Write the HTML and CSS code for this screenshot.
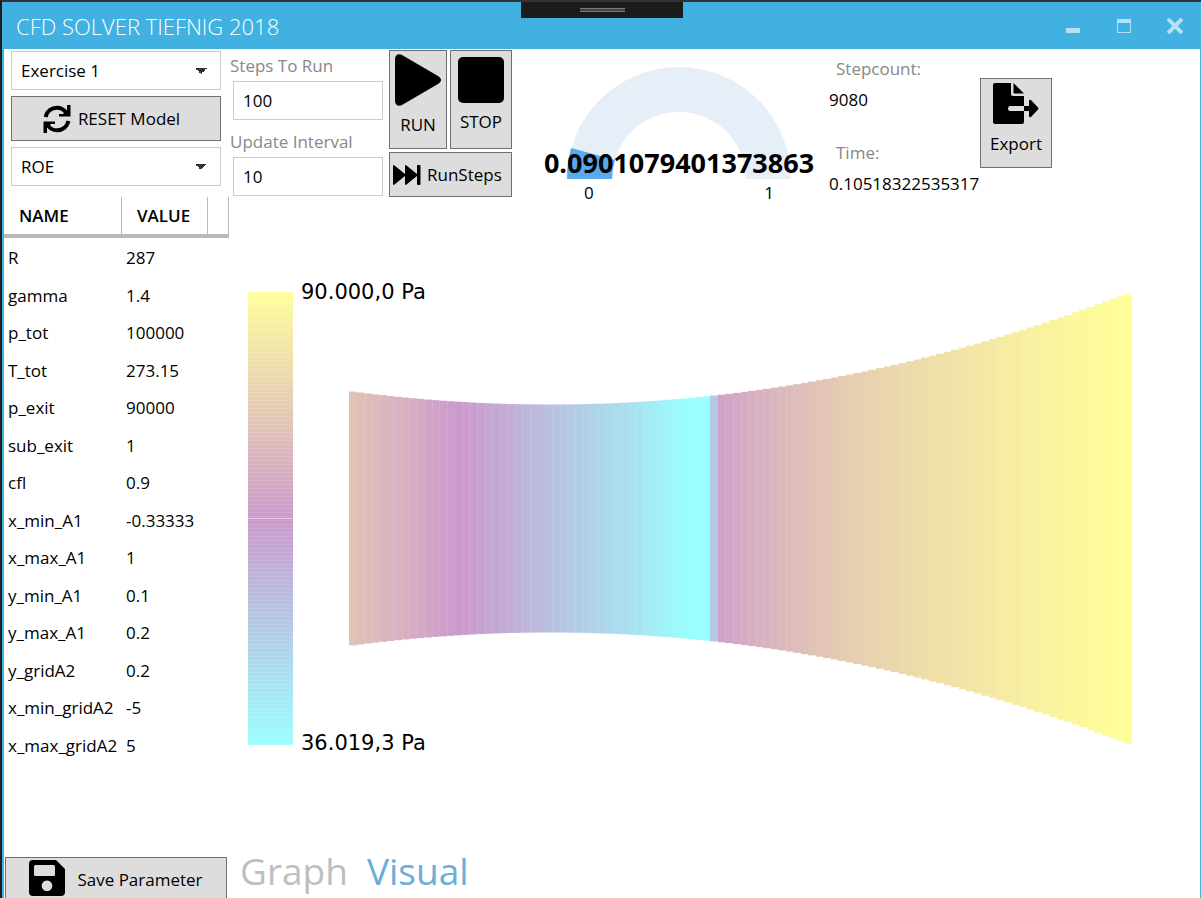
FILE: index.html
```html
<!DOCTYPE html>
<html lang="en">
<head>
<meta charset="utf-8">
<title>CFD Solver Tiefnig 2018</title>
<link rel="stylesheet" href="styles.css">
</head>
<body>
<div class="window">
  <div class="debug-tab" aria-hidden="true"><span class="grip"></span></div>
  <header class="titlebar">
    <h1 class="title">CFD SOLVER TIEFNIG 2018</h1>
    <div class="window-buttons">
      <button type="button" class="win-btn" aria-label="Minimize"><svg width="16" height="16" viewBox="0 0 16 16"><path d="M1 10h14v5H1z" fill="#b5e1f6"/></svg></button>
      <button type="button" class="win-btn" aria-label="Maximize"><svg width="16" height="16" viewBox="0 0 16 16"><path fill-rule="evenodd" d="M1 1h14v14H1zM2 5v9h12V5z" fill="#b5e1f6"/></svg></button>
      <button type="button" class="win-btn" aria-label="Close"><svg width="16" height="16" viewBox="0 0 16 16"><path d="M1 1l14 14M15 1L1 15" stroke="#b5e1f6" stroke-width="4"/></svg></button>
    </div>
  </header>

  <div class="workspace">
    <aside class="sidebar">
      <div class="model">
        <select class="field" aria-label="Exercise"><option>Exercise 1</option></select>
        <button type="button" class="btn reset">
          <svg width="28" height="28" viewBox="0 0 28 28" fill="none" stroke="#000" stroke-width="4"><path d="M2.500 12C4 6 8.500 2.700 14 2.700c4 0 7 1.800 9 4.800"/><path d="M25.500 16C24 22 19.500 25.300 14 25.300c-4 0-7-1.800-9-4.800"/><path d="M27.500 0v11.500H16V9h4l4-4V0zM.5 28V16.500H12V19H8l-4 4v5z" fill="#000" stroke="none"/></svg>
          <span>RESET Model</span>
        </button>
        <select class="field" aria-label="Scheme"><option>ROE</option></select>
      </div>
      <table class="params">
        <thead><tr><th class="name-col">NAME</th><th class="value-col">VALUE</th><th class="rest-col"></th></tr></thead>
        <tbody>
          <tr><td>R</td><td>287</td><td></td></tr>
          <tr><td>gamma</td><td>1.4</td><td></td></tr>
          <tr><td>p_tot</td><td>100000</td><td></td></tr>
          <tr><td>T_tot</td><td>273.15</td><td></td></tr>
          <tr><td>p_exit</td><td>90000</td><td></td></tr>
          <tr><td>sub_exit</td><td>1</td><td></td></tr>
          <tr><td>cfl</td><td>0.9</td><td></td></tr>
          <tr><td>x_min_A1</td><td>-0.33333</td><td></td></tr>
          <tr><td>x_max_A1</td><td>1</td><td></td></tr>
          <tr><td>y_min_A1</td><td>0.1</td><td></td></tr>
          <tr><td>y_max_A1</td><td>0.2</td><td></td></tr>
          <tr><td>y_gridA2</td><td>0.2</td><td></td></tr>
          <tr><td>x_min_gridA2</td><td>-5</td><td></td></tr>
          <tr><td>x_max_gridA2</td><td>5</td><td></td></tr>
        </tbody>
      </table>
      <button type="button" class="btn save">
        <svg width="36" height="36" viewBox="0 0 36 36"><path fill-rule="evenodd" d="M4 0h23l9 9v23a4 4 0 0 1-4 4H4a4 4 0 0 1-4-4V4a4 4 0 0 1 4-4zM6.500 5A1.500 1.500 0 0 0 5 6.500v8A1.500 1.500 0 0 0 6.500 16h18a1.500 1.500 0 0 0 1.500-1.500v-8A1.500 1.500 0 0 0 24.500 5zM18 20.500a5.300 5.300 0 1 0 .01 0z"/></svg>
        <span>Save Parameter</span>
      </button>
    </aside>

    <main class="main">
      <div class="toolbar">
        <div class="steps">
          <label for="steps">Steps To Run</label>
          <input class="field" id="steps" type="text" value="100">
          <label for="interval">Update Interval</label>
          <input class="field" id="interval" type="text" value="10">
        </div>
        <div class="run-grid">
          <button type="button" class="btn tall run">
            <svg width="46" height="52" viewBox="0 0 46 52"><path d="M0 5C0 1 3.500-1 7 1l36 21c4 2.500 4 5.500 0 8L7 51c-3.500 2-7 0-7-4z"/></svg>
            <span>RUN</span>
          </button>
          <button type="button" class="btn tall stop">
            <svg width="46" height="46" viewBox="0 0 46 46"><rect width="46" height="46" rx="5"/></svg>
            <span>STOP</span>
          </button>
          <button type="button" class="btn run-steps">
            <svg width="28" height="20" viewBox="0 0 28 20"><path d="M0 1Q0-.5 1.500.5L12 9V1Q12-.5 13.500.5L24 9V1q0-1 1-1h1.500q1 0 1 1v18q0 1-1 1H25q-1 0-1-1v-8l-10.500 8.500Q12 20.500 12 19v-8L1.500 19.500Q0 20.500 0 19z"/></svg>
            <span>RunSteps</span>
          </button>
        </div>
        <div class="gauge">
          <svg class="gauge-arc" width="226" height="113" viewBox="0 0 226 113">
            <path d="M1 112A112 112 0 0 1 225 112H180A67 67 0 0 0 46 112z" fill="#e6eef8"/>
            <path d="M1 112A112 112 0 0 1 5 81L49 93A67 67 0 0 0 46 112z" fill="#5aa9ec"/>
          </svg>
          <strong class="gauge-value">0.0901079401373863</strong>
          <div class="gauge-range"><span>0</span><span>1</span></div>
        </div>
        <dl class="stats">
          <dt>Stepcount:</dt><dd>9080</dd>
          <dt>Time:</dt><dd>0.10518322535317</dd>
        </dl>
        <button type="button" class="btn export">
          <svg width="46" height="42" viewBox="0 0 46 42"><path d="M2 0h16v11q0 2 2 2h11v10H17q-2 0-2 2.500t2 2.500h14v11q0 2-2 2H2q-2 0-2-2V2Q0 0 2 0z"/><path d="M20.500 0l10.500 10.500H20.500zM31 23h5v-5q0-2 2-1l7 7.500q1 1 0 2L38 34q-2 1-2-1v-5h-5z"/></svg>
          <span>Export</span>
        </button>
      </div>

      <section class="visual">
        <div class="legend-bar"></div>
        <div class="legend-text"><span>90.000,0 Pa</span><span>36.019,3 Pa</span></div>
        <svg class="nozzle" id="nozzle" viewBox="0 0 783 453" preserveAspectRatio="none" role="img" aria-label="Pressure in nozzle"></svg>
      </section>

      <nav class="tabs"><a href="#graph" class="tab">Graph</a><a href="#visual" class="tab active">Visual</a></nav>
    </main>
  </div>
</div>
<script src="nozzle.js"></script>
</body>
</html>
```
FILE: nozzle.js
```js
// Normalised pressure along the nozzle: [x, value]
const profile = [[0, 0.71], [55, 0.61], [109, 0.5], [150, 0.42], [201, 0.31], [240, 0.23], [290, 0.13], [330, 0.02], [359, 0],
  [360, 0.26], [367, 0.26], [368, 0.54], [430, 0.65], [500, 0.76], [570, 0.83], [650, 0.9], [720, 0.96], [783, 1]];
const low = [153, 255, 255], mid = [204, 153, 204], high = [255, 255, 153];

function pressureAt(x) {
  const i = Math.max(1, profile.findIndex(p => p[0] >= x));
  const [x0, p0] = profile[i - 1], [x1, p1] = profile[i];
  return p0 + (p1 - p0) * (x - x0) / (x1 - x0);
}

function colourOf(t) {
  const [a, b, k] = t < 0.5 ? [low, mid, t * 2] : [mid, high, t * 2 - 1];
  return `rgb(${a.map((v, i) => Math.round(v + (b[i] - v) * k)).join()})`;
}

const svg = document.getElementById('nozzle');

function addRect(x, half, width, fill, opacity) {
  const rect = document.createElementNS('http://www.w3.org/2000/svg', 'rect');
  const attrs = { x, y: 226.5 - half, width, height: half * 2, fill, 'fill-opacity': opacity };
  for (const name in attrs) rect.setAttribute(name, attrs[name]);
  svg.append(rect);
}

const cells = 104, width = 783;
for (let i = 0; i < cells; i++) {
  const left = Math.round(i * width / cells), right = Math.round((i + 1) * width / cells);
  const centre = (left + right) / 2;
  const half = 114 + 113 * Math.pow((centre - 201) / 582, 2);
  addRect(left, half, right - left, colourOf(pressureAt(centre)), 1);
  if (i > 1 && i < 60 && (i < 42 || i > 49)) addRect(left, half, 1, '#fff', 0.1);
}
```
FILE: styles.css
```css
* { box-sizing: border-box; }
body {
  margin: 0;
  background: #fff;
  color: #000;
  font: 17px/24px "Open Sans", "Noto Sans", sans-serif;
}
button, input, select { font: inherit; color: inherit; }
h1, dl, dd { margin: 0; }

.window {
  position: relative;
  display: flex;
  flex-direction: column;
  min-height: 100vh;
  border-top: 2px solid #333337;
  border-left: 2px solid #1e1e1e;
}
.titlebar {
  display: flex;
  justify-content: space-between;
  align-items: center;
  height: 47px;
  padding: 0 18px 0 14px;
  background: #41b1e1;
}
.title { font-size: 22px; line-height: 32px; font-weight: 300; color: #fff; }
.window-buttons { display: flex; gap: 35px; }
.win-btn { display: flex; padding: 0; border: 0; background: none; }
.debug-tab {
  position: absolute;
  top: 0;
  left: 519px;
  display: flex;
  justify-content: center;
  width: 162px;
  height: 16px;
  padding-top: 6px;
  background: #1b1b1c;
}
.grip { width: 45px; height: 4px; border: solid #777; border-width: 1px 0; background: #444; }

.workspace {
  display: flex;
  flex: 1;
  border: solid #41b1e1;
  border-width: 0 1px 0 2px;
}
.sidebar { display: flex; flex-direction: column; width: 225px; }
.model { display: flex; flex-direction: column; gap: 6px; padding: 2px 8px 11px 7px; }
.field {
  width: 100%;
  height: 39px;
  padding: 0 9px;
  border: 1px solid #ccc;
  border-radius: 0;
  background-color: #fff;
}
select.field {
  appearance: none;
  background-image:
    linear-gradient(to bottom left, #333 50%, transparent 50%),
    linear-gradient(to bottom right, #333 50%, transparent 50%);
  background-position: right 19px center, right 13px center;
  background-size: 6px 6px;
  background-repeat: no-repeat;
}
.btn {
  display: flex;
  align-items: center;
  justify-content: center;
  padding: 0;
  border: 1px solid #707070;
  background: #ddd;
}
.reset { gap: 7px; height: 45px; padding-right: 9px; }
.params { width: 225px; border-spacing: 0; table-layout: fixed; }
.params th {
  height: 41px;
  padding: 0 0 0 15px;
  border-right: 1px solid #bbb;
  border-bottom: 4px solid #b9b9b9;
  text-align: left;
  font-weight: 600;
}
.name-col { width: 118px; }
.value-col { width: 86px; }
.params td { height: 38px; padding: 2px 0 0 4px; white-space: nowrap; }
.params tr:nth-child(even) td { height: 37px; }
.save {
  align-items: flex-start;
  gap: 12px;
  height: 41px;
  margin: auto 2px 0 1px;
  padding-top: 2px;
  border-bottom: 0;
}
.save span { padding-top: 8px; }

.main { display: flex; flex: 1; flex-direction: column; min-width: 0; }
.toolbar { display: flex; align-items: flex-start; height: 150px; }
.steps { display: flex; flex-direction: column; width: 154px; padding-top: 5px; color: #888; }
.steps label { margin: 0 0 3px 1px; }
.steps .field { width: 150px; margin: 0 0 10px 4px; color: #000; }
.run-grid {
  display: grid;
  grid-template-columns: 58px 62px;
  grid-template-rows: 99px 45px;
  gap: 3px;
  margin: 1px 0 0 6px;
}
.tall { flex-direction: column; justify-content: flex-start; }
.run { gap: 7px; padding-top: 3px; }
.stop { gap: 7px; padding-top: 6px; }
.run-steps { grid-column: span 2; justify-content: flex-start; gap: 6px; padding-left: 3px; }
.gauge { display: flex; flex-direction: column; align-items: center; width: 274px; margin: 18px 0 0 30px; }
.gauge-value { margin-top: -35px; font-size: 27px; line-height: 36px; font-weight: 700; z-index: 1; }
.gauge-range { display: flex; justify-content: space-between; width: 190px; }
.stats { width: 151px; margin: 8px 0 0 13px; }
.stats dt { padding-left: 7px; color: #888; }
.stats dd { margin: 7px 0 29px; }
.export { flex-direction: column; gap: 7px; justify-content: flex-start; width: 72px; height: 90px; margin-top: 29px; padding-top: 4px; }

.visual { display: flex; height: 453px; margin: 93px 68px 0 19px; }
.legend-bar {
  width: 45px;
  background:
    linear-gradient(#e6c8e6, #e6c8e6) 0 226px / 100% 1px no-repeat,
    repeating-linear-gradient(rgba(255, 255, 255, .12) 0 1px, transparent 1px 4px),
    linear-gradient(#ff9, #c9c 50%, #9ff);
}
.legend-text {
  display: flex;
  flex-direction: column;
  justify-content: space-between;
  width: 56px;
  margin: -14px 0 -12px;
  padding-left: 8px;
  font: 21px/28px "DejaVu Sans", sans-serif;
  white-space: nowrap;
}
.nozzle { flex: 1; min-width: 0; height: 453px; }
.tabs { display: flex; gap: 19px; margin-top: auto; padding: 0 0 4px 11px; font-size: 37px; line-height: 46px; }
.tab { color: #bebebe; text-decoration: none; }
.tab.active { color: #6aaed9; }
```
